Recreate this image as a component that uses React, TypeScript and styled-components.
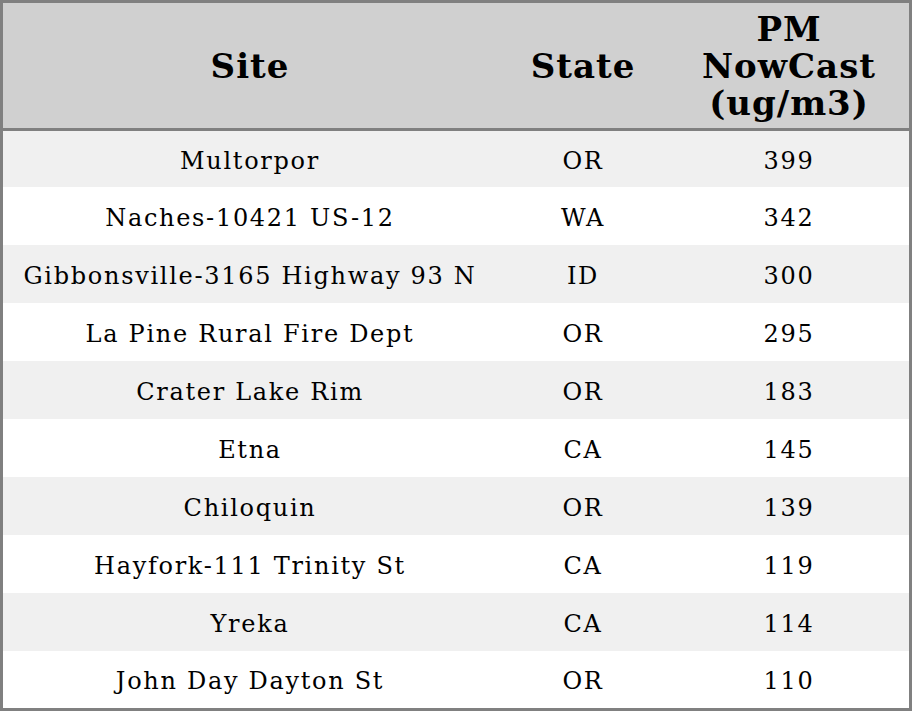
import styled, { createGlobalStyle } from 'styled-components'

interface Reading {
  site: string,
  state: string,
  pm: number,
}

const readings: Reading[] = [
  { site: 'Multorpor', state: 'OR', pm: 399 },
  { site: 'Naches-10421 US-12', state: 'WA', pm: 342 },
  { site: 'Gibbonsville-3165 Highway 93 N', state: 'ID', pm: 300 },
  { site: 'La Pine Rural Fire Dept', state: 'OR', pm: 295 },
  { site: 'Crater Lake Rim', state: 'OR', pm: 183 },
  { site: 'Etna', state: 'CA', pm: 145 },
  { site: 'Chiloquin', state: 'OR', pm: 139 },
  { site: 'Hayfork-111 Trinity St', state: 'CA', pm: 119 },
  { site: 'Yreka', state: 'CA', pm: 114 },
  { site: 'John Day Dayton St', state: 'OR', pm: 110 },
]

function App() {
  return (
    <>
      <GlobalStyle />
      <StTable>
        <colgroup>
          <col style={{ width: 494 }} />
          <col style={{ width: 172 }} />
          <col style={{ width: 240 }} />
        </colgroup>
        <thead>
          <tr>
            <StHead>Site</StHead>
            <StHead>State</StHead>
            <StHead>PM<br />NowCast<br />(ug/m3)</StHead>
          </tr>
        </thead>
        <tbody>
          {readings.map((r, i) => (
            <StRow key={r.site} $striped={i % 2 === 0} $first={i === 0} $last={i === readings.length - 1}>
              <StCell>{r.site}</StCell>
              <StCell>{r.state}</StCell>
              <StCell>{r.pm}</StCell>
            </StRow>
          ))}
        </tbody>
      </StTable>
    </>
  )
}

export default App

const GlobalStyle = createGlobalStyle`
  html, body {
    margin: 0;
    padding: 0;
    background: #ffffff;
  }
  body {
    font-family: "DejaVu Serif", "Liberation Serif", serif;
    color: #000000;
  }
`;

const StTable = styled.table`
  width: 912px;
  table-layout: fixed;
  border-collapse: separate;
  border-spacing: 0;
  border: 3px solid #808080;
`;

const StHead = styled.th`
  height: 123px;
  padding: 2px 0 0 0;
  background: #d0d0d0;
  border-bottom: 3px solid #808080;
  font-size: 34px;
  font-weight: bold;
  line-height: 37px;
  letter-spacing: 1px;
  text-align: center;
  vertical-align: middle;
`;

const StRow = styled.tr<{ $striped: boolean, $first: boolean, $last: boolean }>`
  height: ${({ $first, $last }) => ($first ? 56 : $last ? 57 : 58)}px;
  background: ${({ $striped }) => ($striped ? '#f0f0f0' : '#ffffff')};
`;

const StCell = styled.td`
  padding: 3px 0 0 0;
  font-size: 24px;
  line-height: 28px;
  letter-spacing: 1.7px;
  text-align: center;
  vertical-align: middle;
`;
